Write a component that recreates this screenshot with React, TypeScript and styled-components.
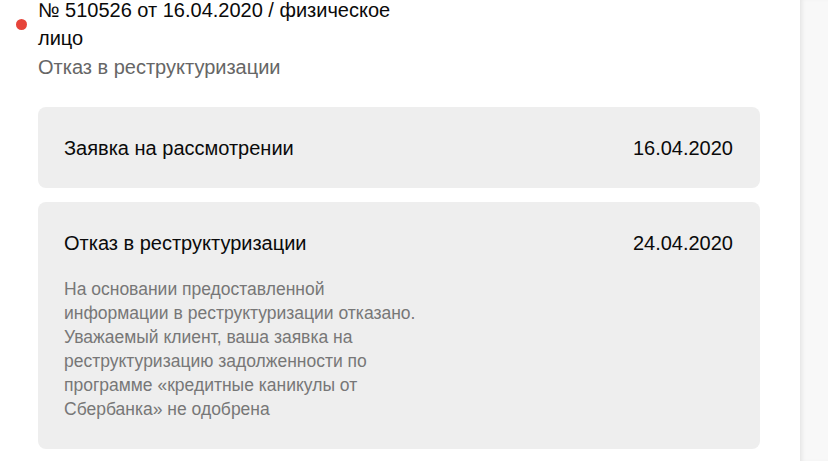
import React from 'react';
import styled, {createGlobalStyle} from 'styled-components';

const steps:{title:string, date:string, text?:string}[]=[
    {title:'Заявка на рассмотрении', date:'16.04.2020'},
    {
        title:'Отказ в реструктуризации',
        date:'24.04.2020',
        text:'На основании предоставленной информации в реструктуризации отказано. Уважаемый клиент, ваша заявка на реструктуризацию задолженности по программе «кредитные каникулы от Сбербанка» не одобрена'
    }
]

const GlobalStyle = createGlobalStyle`
body{
    margin:0;
    font-family: "Liberation Sans", Arial, sans-serif;
    background:#fff;
    overflow:hidden;
}
`

const App = () => {
    return (
        <Page>
            <GlobalStyle/>
            <Panel>
                <Header>
                    <Dot/>
                    <HeaderText>
                        <Title>№ 510526 от 16.04.2020 / физическое лицо</Title>
                        <Status>Отказ в реструктуризации</Status>
                    </HeaderText>
                </Header>
                <Steps>
                    {steps.map(step=>(
                        <Card key={step.date}>
                            <CardTop>
                                <div className='name'>{step.title}</div>
                                <div className='date'>{step.date}</div>
                            </CardTop>
                            {step.text && <Description>{step.text}</Description>}
                        </Card>
                    ))}
                </Steps>
            </Panel>
            <Side/>
        </Page>
    );
};

export default App;

const Page=styled.div`
display: flex;
height: 461px;
width: 828px;
overflow: hidden;
`

const Panel=styled.div`
width: 800px;
flex-shrink: 0;
background: #fff;
`

const Side=styled.div`
flex: 1;
background: #f8f8f8;
box-shadow: inset 4px 0 4px -2px rgba(0,0,0,0.08);
`

const Header=styled.div`
display: flex;
align-items: flex-start;
padding: 0 0 0 16px;
margin-top: -4px;
`

const Dot=styled.div`
width: 11px;
height: 11px;
border-radius: 50%;
background: #e6443a;
margin-top: 23px;
margin-right: 11px;
flex-shrink: 0;
`

const HeaderText=styled.div`
display: flex;
flex-direction: column;
`

const Title=styled.div`
font-size: 20px;
line-height: 28px;
color: #0a0a0a;
width: 370px;
`

const Status=styled.div`
font-size: 20px;
line-height: 28px;
color: #666;
margin-top: 1px;
`

const Steps=styled.div`
display: flex;
flex-direction: column;
gap: 14px;
margin: 26px 40px 0 38px;
`

const Card=styled.div`
background: #eeeeee;
border-radius: 8px;
padding: 29px 27px 28px 26px;
`

const CardTop=styled.div`
display: flex;
justify-content: space-between;
align-items: center;
font-size: 20px;
line-height: 24px;
color: #0a0a0a;
`

const Description=styled.div`
margin-top: 22px;
width: 362px;
font-size: 17.5px;
line-height: 24px;
color: #777;
`
